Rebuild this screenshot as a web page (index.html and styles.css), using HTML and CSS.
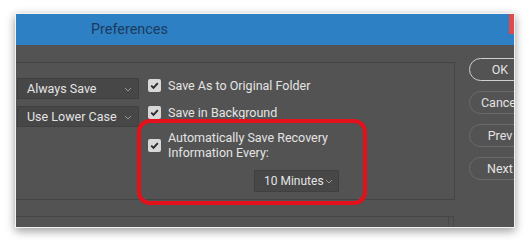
FILE: index.html
```html
<!DOCTYPE html>
<html>
<head>
<meta charset="utf-8">
<link rel="stylesheet" href="styles.css">
</head>
<body>
<div class="window">
  <div class="titlebar">
    <span class="title">Preferences</span>
    <span class="close-sliver"></span>
  </div>
  <div class="main">
    <div class="panel">
      <div class="left-col">
        <div class="select"><span>Always Save</span><svg class="chev" viewBox="0 0 8 5" width="8" height="5"><path d="M1 1 L4 4 L7 1" fill="none" stroke="#9a9a9a" stroke-width="1"/></svg></div>
        <div class="select"><span>Use Lower Case</span><svg class="chev" viewBox="0 0 8 5" width="8" height="5"><path d="M1 1 L4 4 L7 1" fill="none" stroke="#9a9a9a" stroke-width="1"/></svg></div>
      </div>
      <div class="right-col">
        <label class="row">
          <span class="check"><svg viewBox="0 0 13 13" width="13" height="13"><path d="M3.2 6.6 L5.5 8.9 L9.8 4.2" fill="none" stroke="#2b2b2b" stroke-width="1.9"/></svg></span>
          <span>Save As to Original Folder</span>
        </label>
        <label class="row">
          <span class="check"><svg viewBox="0 0 13 13" width="13" height="13"><path d="M3.2 6.6 L5.5 8.9 L9.8 4.2" fill="none" stroke="#2b2b2b" stroke-width="1.9"/></svg></span>
          <span>Save in Background</span>
        </label>
        <label class="row multi">
          <span class="check"><svg viewBox="0 0 13 13" width="13" height="13"><path d="M3.2 6.6 L5.5 8.9 L9.8 4.2" fill="none" stroke="#2b2b2b" stroke-width="1.9"/></svg></span>
          <span class="two-line">Automatically Save Recovery<br>Information Every:</span>
        </label>
        <div class="minutes-row">
          <div class="select small"><span>10 Minutes</span><svg class="chev" viewBox="0 0 8 5" width="8" height="5"><path d="M1 1 L4 4 L7 1" fill="none" stroke="#9a9a9a" stroke-width="1"/></svg></div>
        </div>
      </div>
    </div>
    <div class="buttons">
      <div class="btn default">OK</div>
      <div class="btn">Cancel</div>
      <div class="btn">Prev</div>
      <div class="btn">Next</div>
    </div>
  </div>
  <div class="lower">
    <div class="lower-line"></div>
  </div>
  <div class="highlight"></div>
</div>
</body>
</html>
```
FILE: styles.css
```css
html, body {
  margin: 0;
  padding: 0;
  background: #ffffff;
}
body {
  width: 530px;
  height: 242px;
  overflow: hidden;
  font-family: Roboto, "Noto Sans", sans-serif;
  white-space: nowrap;
}
.window {
  position: relative;
  margin: 13px 0 0 15px;
  width: 498px;
  height: 213px;
  border: 1px solid #f2f2f2;
  background: #535353;
  box-shadow: 0 3px 9px rgba(0, 0, 0, 0.4);
  overflow: hidden;
}
.titlebar {
  position: relative;
  height: 31px;
  background: #2e80c4;
  display: flex;
  align-items: center;
  padding-left: 75px;
}
.title {
  font-size: 14.4px;
  color: #1b3b5d;
}
.close-sliver {
  position: absolute;
  right: 0;
  top: 0;
  width: 5px;
  height: 20px;
  background: #e04a4a;
}
.main {
  display: flex;
  align-items: flex-start;
}
.panel {
  flex: none;
  margin-top: 17px;
  width: 438px;
  height: 121px;
  padding-top: 15px;
  border-top: 1px solid #444444;
  border-right: 1px solid #454545;
  border-bottom: 1px solid #444444;
  display: flex;
}
.left-col {
  flex: none;
  margin-left: 1px;
  width: 122px;
  display: flex;
  flex-direction: column;
  gap: 7px;
}
.select {
  height: 21px;
  box-sizing: border-box;
  background: #474747;
  border: 1px solid #404040;
  display: flex;
  align-items: center;
  justify-content: space-between;
  padding: 0 6px 0 9px;
  color: #e4e4e4;
  font-size: 12.5px;
}
.chev {
  display: block;
  flex: none;
  margin-top: 1px;
}
.right-col {
  flex: none;
  margin-left: 9px;
  margin-top: -3px;
  display: flex;
  flex-direction: column;
}
.row {
  height: 21px;
  display: flex;
  align-items: center;
  gap: 7px;
  color: #e4e4e4;
  font-size: 12.5px;
}
.row + .row {
  margin-top: 6px;
}
.row.multi {
  height: 30px;
  margin-top: 7px;
}
.two-line {
  line-height: 15px;
}
.check {
  width: 13px;
  height: 13px;
  background: #d8d8d8;
  border-radius: 2px;
  flex: none;
  display: block;
}
.check svg {
  display: block;
}
.minutes-row {
  margin-top: 10px;
  padding-left: 106px;
}
.select.small {
  width: 85px;
  height: 22px;
  padding: 0 5px 0 9px;
  font-size: 12px;
}
.buttons {
  flex: none;
  margin-top: 13px;
  margin-left: 14px;
  display: flex;
  flex-direction: column;
  gap: 10px;
}
.btn {
  width: 60px;
  height: 23px;
  box-sizing: border-box;
  border: 1.5px solid #6a6a6a;
  border-radius: 12px;
  display: flex;
  align-items: center;
  justify-content: center;
  color: #e2e2e2;
  font-size: 12.5px;
  padding-left: 2px;
}
.btn.default {
  border-color: #cfcfcf;
}
.lower {
  margin-top: 16px;
  width: 439px;
}
.lower-line {
  height: 9px;
  border-top: 1px solid #464646;
  margin-right: 1px;
  position: relative;
}
.lower-line::after {
  content: "";
  position: absolute;
  right: 0;
  top: 0;
  width: 4px;
  height: 8px;
  border-left: 1px solid #474747;
  border-right: 1px solid #474747;
}
.highlight {
  position: absolute;
  left: 121px;
  top: 105px;
  width: 230px;
  height: 86px;
  box-sizing: border-box;
  border: 4px solid #e3111c;
  border-radius: 13px;
}
```
